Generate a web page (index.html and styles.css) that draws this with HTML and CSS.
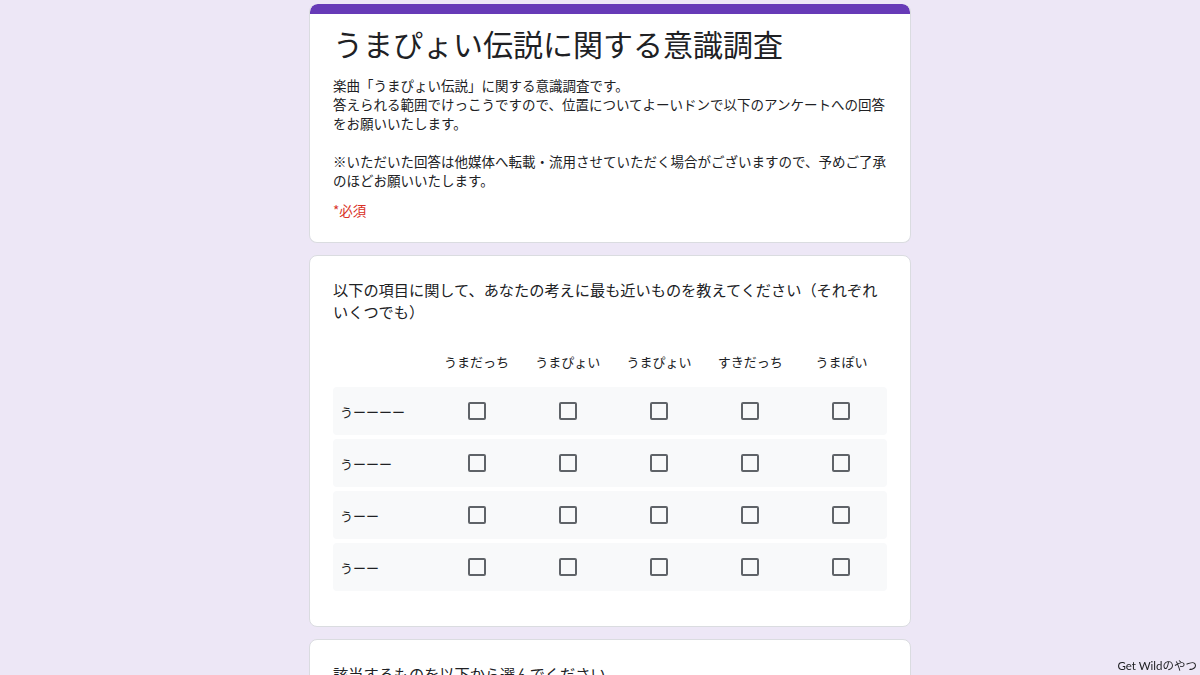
FILE: index.html
```html
<!DOCTYPE html>
<html lang="ja">
<head>
<meta charset="utf-8">
<title>うまぴょい伝説に関する意識調査</title>
<link rel="stylesheet" href="styles.css">
</head>
<body>
<div class="page">
<main class="form">
  <section class="card header-card">
    <div class="accent"></div>
    <div class="header-body">
      <h1 class="title">うまぴょい伝説に関する意識調査</h1>
      <p class="desc">楽曲「うまぴょい伝説」に関する意識調査です。<br>答えられる範囲でけっこうですので、位置についてよーいドンで以下のアンケートへの回答<br>をお願いいたします。<br><br>※いただいた回答は他媒体へ転載・流用させていただく場合がございますので、予めご了承<br>のほどお願いいたします。</p>
      <p class="required">*必須</p>
    </div>
  </section>

  <section class="card question-card">
    <p class="question">以下の項目に関して、あなたの考えに最も近いものを教えてください（それぞれ<br>いくつでも）</p>
    <div class="grid">
      <div class="grid-head">
        <span></span>
        <span>うまだっち</span>
        <span>うまぴょい</span>
        <span>うまぴょい</span>
        <span>すきだっち</span>
        <span>うまぽい</span>
      </div>
      <div class="grid-row">
        <span class="row-label">うーーーー</span>
        <span class="cell"><i class="box"></i></span>
        <span class="cell"><i class="box"></i></span>
        <span class="cell"><i class="box"></i></span>
        <span class="cell"><i class="box"></i></span>
        <span class="cell"><i class="box"></i></span>
      </div>
      <div class="grid-row">
        <span class="row-label">うーーー</span>
        <span class="cell"><i class="box"></i></span>
        <span class="cell"><i class="box"></i></span>
        <span class="cell"><i class="box"></i></span>
        <span class="cell"><i class="box"></i></span>
        <span class="cell"><i class="box"></i></span>
      </div>
      <div class="grid-row">
        <span class="row-label">うーー</span>
        <span class="cell"><i class="box"></i></span>
        <span class="cell"><i class="box"></i></span>
        <span class="cell"><i class="box"></i></span>
        <span class="cell"><i class="box"></i></span>
        <span class="cell"><i class="box"></i></span>
      </div>
      <div class="grid-row">
        <span class="row-label">うーー</span>
        <span class="cell"><i class="box"></i></span>
        <span class="cell"><i class="box"></i></span>
        <span class="cell"><i class="box"></i></span>
        <span class="cell"><i class="box"></i></span>
        <span class="cell"><i class="box"></i></span>
      </div>
    </div>
  </section>

  <section class="card question-card">
    <p class="question">該当するものを以下から選んでください</p>
    <div class="spacer"></div>
  </section>
</main>
</div>
<div class="watermark">Get Wildのやつ</div>
</body>
</html>
```

FILE: styles.css
```css
html, body {
  margin: 0;
  padding: 0;
  background: #ede7f6;
  height: 675px;
  overflow: hidden;
}
body {
  font-family: "Noto Sans CJK JP", "Noto Sans", sans-serif;
  color: #202124;
}
.page {
  display: flex;
  justify-content: center;
  padding-left: 20px;
}
.form {
  width: 602px;
  padding-top: 4px;
  display: flex;
  flex-direction: column;
  gap: 12px;
}
.card {
  background: #ffffff;
  border: 1px solid #dadce0;
  border-radius: 8px;
  overflow: hidden;
}
.header-card {
  border-top: none;
}
.accent {
  height: 10px;
  background: #673ab7;
  border-radius: 8px 8px 0 0;
}
.header-body {
  padding: 9px 16px 22px 23px;
}
.title {
  margin: 0;
  font-size: 30px;
  font-weight: 400;
  line-height: 40px;
  color: #202124;
}
.desc {
  margin: 13px 0 0;
  font-size: 13.5px;
  line-height: 19px;
  white-space: nowrap;
  color: #202124;
}
.required {
  margin: 11px 0 0;
  font-size: 13.5px;
  line-height: 19px;
  color: #d93025;
}
.question-card {
  padding: 22px 23px 35px 23px;
}
.question {
  margin: 0;
  font-size: 15.2px;
  line-height: 22px;
  white-space: nowrap;
  color: #202124;
}
.grid {
  margin-top: 23px;
  display: flex;
  flex-direction: column;
  gap: 4px;
}
.grid-head, .grid-row {
  display: grid;
  grid-template-columns: 98px repeat(5, 1fr);
  align-items: center;
}
.grid-head {
  height: 32px;
  font-size: 13px;
  text-align: center;
  margin-bottom: 6px;
}
.grid-row {
  height: 48px;
  background: #f8f9fa;
  border-radius: 4px;
}
.row-label {
  padding-left: 7px;
  font-size: 13px;
}
.cell {
  display: flex;
  justify-content: center;
  align-items: center;
}
.box {
  display: block;
  width: 14px;
  height: 14px;
  border: 2px solid #5f6368;
  border-radius: 2px;
}
.spacer {
  height: 120px;
}
.watermark {
  position: fixed;
  right: 3px;
  bottom: 2px;
  font-family: "Lato", "Noto Sans CJK JP", sans-serif;
  font-size: 11.5px;
  color: #202124;
}
```
